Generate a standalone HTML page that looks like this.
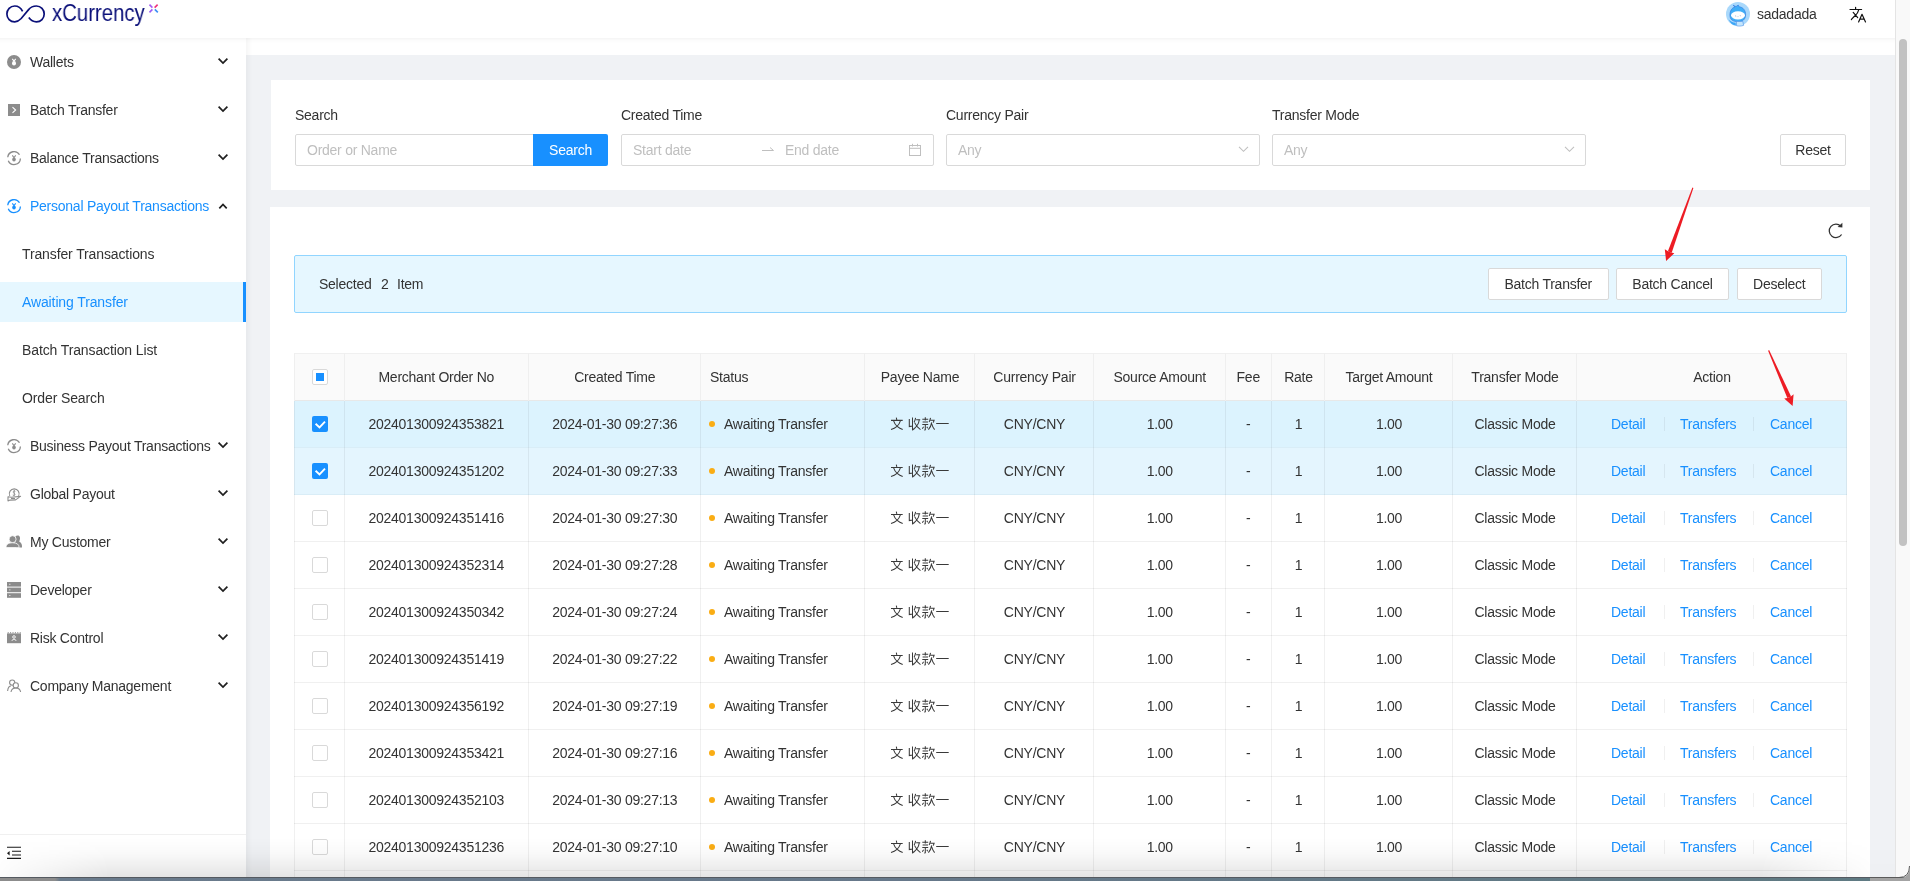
<!DOCTYPE html><html><head><meta charset="utf-8"><style>
*{box-sizing:border-box;margin:0;padding:0}
html,body{width:1910px;height:881px;overflow:hidden;background:#fff;font-family:"Liberation Sans",sans-serif;font-size:14px;color:#333;letter-spacing:-0.25px}
.btn,#content>div{will-change:transform}
.abs{position:absolute}
svg{position:absolute;overflow:visible}
#header{position:absolute;left:0;top:0;width:1895px;height:38px;background:#fff;z-index:5}
#hshadow{position:absolute;left:0;top:38px;width:1895px;height:5px;background:linear-gradient(rgba(0,0,0,0.045),rgba(0,0,0,0.01) 50%,rgba(0,0,0,0));z-index:5}
#sider{position:absolute;left:0;top:38px;width:246px;height:839px;background:#fff;z-index:3}
#content{position:absolute;left:246px;top:38px;width:1649px;height:839px;background:#f0f2f5;overflow:hidden}
#strip{position:absolute;left:0;top:0;width:1649px;height:17px;background:#fff}
#sshadow{position:absolute;left:0;top:0;width:6px;height:839px;background:linear-gradient(90deg,rgba(0,0,0,0.035),rgba(0,0,0,0));z-index:2}
#scroll{position:absolute;left:1895px;top:0;width:15px;height:877px;background:#f9f9f9;border-left:1px solid #e4e4e4;z-index:6}
#thumb{position:absolute;left:3px;top:39px;width:8px;height:507px;border-radius:4px;background:#c2c2c2}
.t{position:absolute;white-space:nowrap;line-height:20px;will-change:transform}
.card{position:absolute;background:#fff}
.inp{position:absolute;height:32px;border:1px solid #d9d9d9;border-radius:2px;background:#fff}
.ph{color:#bfbfbf}
.btn{position:absolute;height:32px;border:1px solid #d9d9d9;border-radius:2px;background:#fff;text-align:center;line-height:30px;white-space:nowrap;color:#333}
.cell{position:absolute;white-space:nowrap;line-height:20px;text-align:center;will-change:transform}
.link{color:#1890ff}
</style></head><body>
<div id="header">
<svg style="left:0;top:0" width="50" height="30"><path d="M22.6 11.3 C20.8 7.6 18 6 14.7 6 C10.2 6 6.9 9.6 6.9 14 C6.9 18.4 10.2 21.9 14.7 21.9 C17.4 21.9 19.2 20.6 21.2 18.5 L28.6 9.6 C30.6 7.2 33 6 36.4 6 C40.9 6 44.2 9.6 44.2 14 C44.2 18.4 40.9 21.9 36.4 21.9 C33.2 21.9 30.8 20.4 28.8 17.6" fill="none" stroke="#0b1079" stroke-width="1.7"/></svg>
<div class="t" style="left:52px;top:-1px;font-size:23px;line-height:28px;color:#0b1079;letter-spacing:0;transform:scaleX(0.885);transform-origin:0 0">xCurrency</div>
<svg style="left:0;top:0" width="1" height="1"><path d="M149.5 4.6 L152.4 7.6" stroke="#a25cf2" stroke-width="1.6"/><path d="M157.6 4.6 L154.6 7.6" stroke="#f0307a" stroke-width="1.6"/><path d="M149.5 12.4 L152.4 9.4" stroke="#9a5cf5" stroke-width="1.6"/><path d="M157.8 12.4 L154.8 9.4" stroke="#3b8ef5" stroke-width="1.6"/></svg>
<svg style="left:1726px;top:2px" width="24" height="24" viewBox="0 0 24 24"><circle cx="12" cy="12" r="12" fill="#a9d8fb"/><path d="M4 14 C3.6 9 6 5.6 9 5 L7 3.2 L10 4.6 L12.2 3 L13.2 4.8 C17 5.2 19.8 8.5 19.6 13 C19.4 17.6 16.6 19.6 12 19.6 C7 19.6 4.3 17.8 4 14Z" fill="#40aef7" stroke="#3a7fe2" stroke-width="0.7"/><ellipse cx="12" cy="13.3" rx="7" ry="4.1" fill="#fff"/><path d="M9 13.8 L10.2 14.2 M11.6 14.6 L12.4 14.6 M13.8 13.6 L14.8 13.8" stroke="#9ab0d0" stroke-width="0.8"/><path d="M2.6 17.5 C4.5 19.5 6.5 20.5 9.5 20.8 L10 23.5 C7 23.4 4.2 21.4 2.6 17.5Z" fill="#3ca6f6"/><path d="M10.4 19.4 L16.8 19.4 L17.6 23.4 C15 24.2 12.5 24.3 10.6 23.8Z" fill="#c5e6fd" stroke="#4a90e8" stroke-width="0.6"/></svg>
<div class="t" style="left:1757px;top:4px">sadadada</div>
<svg style="left:0;top:0" width="1" height="1"><path d="M1850 9.5 L1861.6 9.5 M1855.6 7.3 L1855.6 9.5 M1858.6 10.2 C1858 12.5 1857.2 14 1855.5 15.2 C1854 16.5 1852.8 18 1851.4 19.5 M1853.2 12.4 L1857.7 17.6" fill="none" stroke="#111" stroke-width="1.2" stroke-linecap="round"/><path d="M1858.6 22 L1862 14.3 L1865.5 22 M1860 19.2 L1864.3 19.2" fill="none" stroke="#111" stroke-width="1.2" stroke-linecap="round" stroke-linejoin="round"/></svg>
</div><div id="hshadow"></div>
<div id="sider">
<div class="t" style="left:30px;top:14px;color:#333;">Wallets</div>
<svg style="left:0;top:0" width="1" height="1"><circle cx="14" cy="24" r="7" fill="#8c8c8c"/><path d="M12.3 20.8 L14 23.1 L15.7 20.8" stroke="#fff" stroke-width="1.1" fill="none"/><ellipse cx="14" cy="25.3" rx="2" ry="2.3" fill="#fff"/></svg>
<svg style="left:0;top:0" width="1" height="1"><path d="M218.6 20.7 L223.0 25.1 L227.4 20.7" fill="none" stroke="#1f1f1f" stroke-width="1.7"/></svg>
<div class="t" style="left:30px;top:62px;color:#333;">Batch Transfer</div>
<svg style="left:0;top:0" width="1" height="1"><rect x="8" y="66" width="12" height="12" fill="#8c8c8c"/><path d="M12.5 69.2 L15.6 72 L12.5 74.8" stroke="#fff" stroke-width="1.1" fill="none"/></svg>
<svg style="left:0;top:0" width="1" height="1"><path d="M218.6 68.7 L223.0 73.10000000000001 L227.4 68.7" fill="none" stroke="#1f1f1f" stroke-width="1.7"/></svg>
<div class="t" style="left:30px;top:110px;color:#333;">Balance Transactions</div>
<svg style="left:0;top:0" width="1" height="1"><path d="M7.75 119.3 A6.3 6.3 0 0 1 19.5 116.8" stroke="#8c8c8c" stroke-width="1.3" fill="none"/><path d="M20.4 120.5 A6.3 6.3 0 0 1 8.3 122.7" stroke="#8c8c8c" stroke-width="1.3" fill="none"/><path d="M12.3 117.3 L14 119.5 L15.7 117.3" stroke="#8c8c8c" stroke-width="1.1" fill="none"/><ellipse cx="14" cy="121.5" rx="1.8" ry="2" fill="#8c8c8c"/></svg>
<svg style="left:0;top:0" width="1" height="1"><path d="M218.6 116.7 L223.0 121.10000000000001 L227.4 116.7" fill="none" stroke="#1f1f1f" stroke-width="1.7"/></svg>
<div class="t" style="left:30px;top:158px;color:#1890ff;">Personal Payout Transactions</div>
<svg style="left:0;top:0" width="1" height="1"><path d="M7.75 167.3 A6.3 6.3 0 0 1 19.5 164.8" stroke="#1890ff" stroke-width="1.3" fill="none"/><path d="M20.4 168.5 A6.3 6.3 0 0 1 8.3 170.7" stroke="#1890ff" stroke-width="1.3" fill="none"/><path d="M12.3 165.3 L14 167.5 L15.7 165.3" stroke="#1890ff" stroke-width="1.1" fill="none"/><ellipse cx="14" cy="169.5" rx="1.8" ry="2" fill="#1890ff"/></svg>
<svg style="left:0;top:0" width="1" height="1"><path d="M219.3 170.4 L223.0 166.4 L226.70000000000002 170.4" fill="none" stroke="#1f1f1f" stroke-width="1.7"/></svg>
<div class="t" style="left:22px;top:206px;color:#333;letter-spacing:-0.12px;">Transfer Transactions</div>
<div class="abs" style="left:0;top:244px;width:246px;height:40px;background:#e6f7ff"></div>
<div class="abs" style="left:243px;top:244px;width:3px;height:40px;background:#1890ff"></div>
<div class="t" style="left:22px;top:254px;color:#1890ff;letter-spacing:-0.12px;">Awaiting Transfer</div>
<div class="t" style="left:22px;top:302px;color:#333;letter-spacing:-0.12px;">Batch Transaction List</div>
<div class="t" style="left:22px;top:350px;color:#333;letter-spacing:-0.12px;">Order Search</div>
<div class="t" style="left:30px;top:398px;color:#333;">Business Payout Transactions</div>
<svg style="left:0;top:0" width="1" height="1"><path d="M7.75 407.3 A6.3 6.3 0 0 1 19.5 404.8" stroke="#8c8c8c" stroke-width="1.3" fill="none"/><path d="M20.4 408.5 A6.3 6.3 0 0 1 8.3 410.7" stroke="#8c8c8c" stroke-width="1.3" fill="none"/><path d="M12.3 405.3 L14 407.5 L15.7 405.3" stroke="#8c8c8c" stroke-width="1.1" fill="none"/><ellipse cx="14" cy="409.5" rx="1.8" ry="2" fill="#8c8c8c"/></svg>
<svg style="left:0;top:0" width="1" height="1"><path d="M218.6 404.7 L223.0 409.09999999999997 L227.4 404.7" fill="none" stroke="#1f1f1f" stroke-width="1.7"/></svg>
<div class="t" style="left:30px;top:446px;color:#333;">Global Payout</div>
<svg style="left:0;top:0" width="1" height="1"><path d="M9.8 457.9 A4.9 4.9 0 1 1 18.6 457.9" stroke="#8c8c8c" stroke-width="1.1" fill="none"/><path d="M15.3 453.3 C14.2 452.5 12.8 453.3 13.4 454.5 C14.2 455.5 15.6 456.1 14.6 457.1 C13.8 457.7 12.8 457.3 12.6 456.9 M14.2 451.9 L14.2 457.9" stroke="#8c8c8c" stroke-width="0.9" fill="none"/><path d="M8 462.9 L8 458.7 L11.2 459.3 L20.6 458.4 L15.6 461.9 L10 462.1 Z M11 460.5 L15 460.5" stroke="#8c8c8c" stroke-width="1.1" fill="none" stroke-linejoin="round"/></svg>
<svg style="left:0;top:0" width="1" height="1"><path d="M218.6 452.7 L223.0 457.09999999999997 L227.4 452.7" fill="none" stroke="#1f1f1f" stroke-width="1.7"/></svg>
<div class="t" style="left:30px;top:494px;color:#333;">My Customer</div>
<svg style="left:0;top:0" width="1" height="1"><path d="M17.8 497.6 C20 497.6 20.6 500.4 19.6 502.4 C19.2 503.2 19.2 503.6 19.8 504 C21.4 505 22.2 506.6 22 509.4 L16 509.4 C16 506.4 15 505 14.6 504 C16.2 502.5 16.2 500 15.2 498.4 C15.8 497.8 16.8 497.6 17.8 497.6Z" fill="#8c8c8c"/><circle cx="12.6" cy="501.2" r="3.5" fill="#8c8c8c" stroke="#fff" stroke-width="0.8"/><path d="M6 509.6 C6.2 506.2 8.4 504.8 12.6 504.8 C16.8 504.8 19 506.2 19.2 509.6Z" fill="#8c8c8c" stroke="#fff" stroke-width="0.8"/></svg>
<svg style="left:0;top:0" width="1" height="1"><path d="M218.6 500.7 L223.0 505.09999999999997 L227.4 500.7" fill="none" stroke="#1f1f1f" stroke-width="1.7"/></svg>
<div class="t" style="left:30px;top:542px;color:#333;">Developer</div>
<svg style="left:0;top:0" width="1" height="1"><rect x="7" y="544" width="14" height="4.6" fill="#8c8c8c"/><rect x="7" y="549.6" width="14" height="4.6" fill="#8c8c8c"/><rect x="7" y="555.2" width="14" height="4.6" fill="#8c8c8c"/><path d="M9 546.3 L10.5 546.3 M9 551.9 L10.5 551.9 M9 557.5 L10.5 557.5" stroke="#ddd" stroke-width="0.9"/></svg>
<svg style="left:0;top:0" width="1" height="1"><path d="M218.6 548.7 L223.0 553.1 L227.4 548.7" fill="none" stroke="#1f1f1f" stroke-width="1.7"/></svg>
<div class="t" style="left:30px;top:590px;color:#333;">Risk Control</div>
<svg style="left:0;top:0" width="1" height="1"><rect x="7" y="595.4" width="14" height="9.8" fill="#8c8c8c"/><path d="M8.2 595.4 L8.2 594 M10.6 595.4 L10.6 594 M13 595.4 L13 594 M15.4 595.4 L15.4 594 M17.8 595.4 L17.8 594 M20.2 595.4 L20.2 594" stroke="#8c8c8c" stroke-width="0.9"/><circle cx="14" cy="599" r="1.3" stroke="#fff" stroke-width="0.9" fill="none"/><path d="M11.8 603 C12 601 16 601 16.2 603" stroke="#fff" stroke-width="0.9" fill="none"/></svg>
<svg style="left:0;top:0" width="1" height="1"><path d="M218.6 596.7 L223.0 601.1 L227.4 596.7" fill="none" stroke="#1f1f1f" stroke-width="1.7"/></svg>
<div class="t" style="left:30px;top:638px;color:#333;">Company Management</div>
<svg style="left:0;top:0" width="1" height="1"><circle cx="12.2" cy="644.6" r="2.6" stroke="#8c8c8c" stroke-width="1.1" fill="none"/><circle cx="15.8" cy="647.4" r="2.6" stroke="#8c8c8c" stroke-width="1.1" fill="#fff"/><path d="M7.6 653 C8 649.5 9.5 648 11 648" stroke="#8c8c8c" stroke-width="1.1" fill="none"/><path d="M11 654 C11.4 651.4 13.2 650 15.8 650 C18.4 650 20.2 651.4 20.6 654" stroke="#8c8c8c" stroke-width="1.1" fill="none"/></svg>
<svg style="left:0;top:0" width="1" height="1"><path d="M218.6 644.7 L223.0 649.1 L227.4 644.7" fill="none" stroke="#1f1f1f" stroke-width="1.7"/></svg>
<div class="abs" style="left:0;top:796px;width:246px;height:1px;background:#f0f0f0"></div>
<svg style="left:0;top:0" width="1" height="1"><path d="M7 809.3 L21 809.3 M7 820.4 L21 820.4 M12 813.2 L21 813.2 M12 817 L21 817" stroke="#1a1a1a" stroke-width="1.1"/><path d="M7 815.2 L9.6 813 L9.6 817.4 Z" fill="#1a1a1a"/></svg>
</div>
<div id="content"><div id="strip"></div><div id="sshadow"></div>
<div class="card" style="left:25px;top:42px;width:1599px;height:110px"></div>
<div class="t" style="left:49px;top:67px">Search</div>
<div class="t" style="left:375px;top:67px">Created Time</div>
<div class="t" style="left:700px;top:67px">Currency Pair</div>
<div class="t" style="left:1026px;top:67px">Transfer Mode</div>
<div class="inp" style="left:49px;top:96px;width:239px;border-radius:2px 0 0 2px"></div>
<div class="t ph" style="left:61px;top:102px">Order or Name</div>
<div class="abs" style="left:287px;top:96px;width:75px;height:32px;background:#1890ff;border-radius:0 2px 2px 0;color:#fff;text-align:center;line-height:32px">Search</div>
<div class="inp" style="left:375px;top:96px;width:313px"></div>
<div class="t ph" style="left:387px;top:102px">Start date</div>
<div class="t ph" style="left:539px;top:102px">End date</div>
<svg style="left:0;top:0" width="1" height="1"><path d="M516 112.5 L527.5 112.5 L524 109.5" stroke="#bfbfbf" stroke-width="1" fill="none"/><rect x="663.5" y="107.5" width="11" height="10" stroke="#bfbfbf" stroke-width="1" fill="none"/><path d="M663.5 110.30000000000001 L674.5 110.30000000000001 M666.5 105.80000000000001 L666.5 108.5 M671.5 105.80000000000001 L671.5 108.5" stroke="#bfbfbf" stroke-width="1"/></svg>
<div class="inp" style="left:700px;top:96px;width:314px"></div>
<div class="t ph" style="left:712px;top:102px">Any</div>
<svg style="left:0;top:0" width="1" height="1"><path d="M993 108.80000000000001 L997.5 113.30000000000001 L1002 108.80000000000001" stroke="#bfbfbf" stroke-width="1.1" fill="none"/></svg>
<div class="inp" style="left:1026px;top:96px;width:314px"></div>
<div class="t ph" style="left:1038px;top:102px">Any</div>
<svg style="left:0;top:0" width="1" height="1"><path d="M1319 108.80000000000001 L1323.5 113.30000000000001 L1328 108.80000000000001" stroke="#bfbfbf" stroke-width="1.1" fill="none"/></svg>
<div class="btn" style="left:1534px;top:96px;width:66px">Reset</div>
<div class="card" style="left:24px;top:169px;width:1600px;height:700px"></div>
<svg style="left:0;top:0" width="1" height="1"><path d="M1594.8 188.2 A6.7 6.7 0 1 0 1595.6 196.5" stroke="#333" stroke-width="1.3" fill="none"/><path d="M1591.6 188.9 L1596.4 189.6 L1596.4 184.8Z" fill="#333"/></svg>
<div class="abs" style="left:48px;top:217px;width:1553px;height:58px;background:#e6f7ff;border:1px solid #91d5ff;border-radius:2px"></div>
<div class="t" style="left:73px;top:236px">Selected</div><div class="t" style="left:134.5px;top:236px">2</div><div class="t" style="left:150.5px;top:236px">Item</div>
<div class="btn" style="left:1241.5px;top:230px;width:120.5px">Batch Transfer</div>
<div class="btn" style="left:1370px;top:230px;width:113px">Batch Cancel</div>
<div class="btn" style="left:1491px;top:230px;width:84.5px">Deselect</div>
<div class="abs" style="left:48px;top:315px;width:1553px;height:48px;background:#fafafa;border:1px solid #f0f0f0;border-bottom:1px solid #e8e8e8"></div>
<div class="abs" style="left:48px;top:363px;width:1553px;height:47px;background:#dcf3fe;border-bottom:1px solid #d9edf7"></div>
<div class="abs" style="left:48px;top:410px;width:1553px;height:47px;background:#e4f5fe;border-bottom:1px solid #d9edf7"></div>
<div class="abs" style="left:48px;top:457px;width:1553px;height:47px;background:#fff;border-bottom:1px solid #f0f0f0"></div>
<div class="abs" style="left:48px;top:504px;width:1553px;height:47px;background:#fff;border-bottom:1px solid #f0f0f0"></div>
<div class="abs" style="left:48px;top:551px;width:1553px;height:47px;background:#fff;border-bottom:1px solid #f0f0f0"></div>
<div class="abs" style="left:48px;top:598px;width:1553px;height:47px;background:#fff;border-bottom:1px solid #f0f0f0"></div>
<div class="abs" style="left:48px;top:645px;width:1553px;height:47px;background:#fff;border-bottom:1px solid #f0f0f0"></div>
<div class="abs" style="left:48px;top:692px;width:1553px;height:47px;background:#fff;border-bottom:1px solid #f0f0f0"></div>
<div class="abs" style="left:48px;top:739px;width:1553px;height:47px;background:#fff;border-bottom:1px solid #f0f0f0"></div>
<div class="abs" style="left:48px;top:786px;width:1553px;height:47px;background:#fff;border-bottom:1px solid #f0f0f0"></div>
<div class="abs" style="left:48px;top:833px;width:1553px;height:47px;background:#fff;border-bottom:1px solid #f0f0f0"></div>
<div class="abs" style="left:48.0px;top:315px;width:1px;height:48px;background:#efefef"></div>
<div class="abs" style="left:48.0px;top:363px;width:1px;height:600px;background:rgba(0,0,0,0.058)"></div>
<div class="abs" style="left:97.5px;top:315px;width:1px;height:48px;background:#efefef"></div>
<div class="abs" style="left:97.5px;top:363px;width:1px;height:600px;background:rgba(0,0,0,0.058)"></div>
<div class="abs" style="left:282.0px;top:315px;width:1px;height:48px;background:#efefef"></div>
<div class="abs" style="left:282.0px;top:363px;width:1px;height:600px;background:rgba(0,0,0,0.058)"></div>
<div class="abs" style="left:453.5px;top:315px;width:1px;height:48px;background:#efefef"></div>
<div class="abs" style="left:453.5px;top:363px;width:1px;height:600px;background:rgba(0,0,0,0.058)"></div>
<div class="abs" style="left:618.0px;top:315px;width:1px;height:48px;background:#efefef"></div>
<div class="abs" style="left:618.0px;top:363px;width:1px;height:600px;background:rgba(0,0,0,0.058)"></div>
<div class="abs" style="left:728.0px;top:315px;width:1px;height:48px;background:#efefef"></div>
<div class="abs" style="left:728.0px;top:363px;width:1px;height:600px;background:rgba(0,0,0,0.058)"></div>
<div class="abs" style="left:847.0px;top:315px;width:1px;height:48px;background:#efefef"></div>
<div class="abs" style="left:847.0px;top:363px;width:1px;height:600px;background:rgba(0,0,0,0.058)"></div>
<div class="abs" style="left:978.5px;top:315px;width:1px;height:48px;background:#efefef"></div>
<div class="abs" style="left:978.5px;top:363px;width:1px;height:600px;background:rgba(0,0,0,0.058)"></div>
<div class="abs" style="left:1025.0px;top:315px;width:1px;height:48px;background:#efefef"></div>
<div class="abs" style="left:1025.0px;top:363px;width:1px;height:600px;background:rgba(0,0,0,0.058)"></div>
<div class="abs" style="left:1078.0px;top:315px;width:1px;height:48px;background:#efefef"></div>
<div class="abs" style="left:1078.0px;top:363px;width:1px;height:600px;background:rgba(0,0,0,0.058)"></div>
<div class="abs" style="left:1206.0px;top:315px;width:1px;height:48px;background:#efefef"></div>
<div class="abs" style="left:1206.0px;top:363px;width:1px;height:600px;background:rgba(0,0,0,0.058)"></div>
<div class="abs" style="left:1330.0px;top:315px;width:1px;height:48px;background:#efefef"></div>
<div class="abs" style="left:1330.0px;top:363px;width:1px;height:600px;background:rgba(0,0,0,0.058)"></div>
<div class="abs" style="left:1600.0px;top:315px;width:1px;height:48px;background:#efefef"></div>
<div class="abs" style="left:1600.0px;top:363px;width:1px;height:600px;background:rgba(0,0,0,0.058)"></div>
<div class="cell" style="left:98px;top:328.5px;width:184.5px">Merchant Order No</div>
<div class="cell" style="left:282.5px;top:328.5px;width:171.5px">Created Time</div>
<div class="t" style="left:463.5px;top:328.5px">Status</div>
<div class="cell" style="left:618.5px;top:328.5px;width:110.0px">Payee Name</div>
<div class="cell" style="left:728.5px;top:328.5px;width:119.0px">Currency Pair</div>
<div class="cell" style="left:847.5px;top:328.5px;width:131.5px">Source Amount</div>
<div class="cell" style="left:979px;top:328.5px;width:46.5px">Fee</div>
<div class="cell" style="left:1025.5px;top:328.5px;width:53.0px">Rate</div>
<div class="cell" style="left:1078.5px;top:328.5px;width:128.0px">Target Amount</div>
<div class="cell" style="left:1206.5px;top:328.5px;width:124.0px">Transfer Mode</div>
<div class="cell" style="left:1330.5px;top:328.5px;width:270.0px">Action</div>
<div class="abs" style="left:66px;top:331px;width:16px;height:16px;border:1px solid #d9d9d9;border-radius:2px;background:#fff"></div>
<div class="abs" style="left:70px;top:335px;width:8px;height:8px;background:#1890ff"></div>
<div class="abs" style="left:66px;top:377.5px;width:16px;height:16px;border-radius:2px;background:#1890ff"></div>
<svg style="left:0;top:0" width="1" height="1"><path d="M69.60000000000002 385.8 L73.5 389.4 L79 383.7" stroke="#fff" stroke-width="1.9" fill="none"/></svg>
<svg style="left:640px;top:374.0px" width="68" height="24"><path d="M10.3 5.6 L10.8 7.8 M5 8.4 L16.7 8.4 M7.4 8.4 C8.4 11.4 9.6 13.2 11.2 14.4 C12.8 15.8 14.6 16.9 16.7 17.6 M14.6 8.4 C13.6 11.4 12.6 13.2 11 14.4 C9.4 15.8 7.4 16.9 5 17.6 M23.3 7.1 L23.3 14.6 L26.5 14 M26.5 5.6 L26.5 17.8 L28.6 16.6 M29.6 5.9 C29.3 7.6 28.8 9 28.1 10.3 M30.2 7.8 L34.2 7.8 M33.3 7.8 C32.8 11.6 31.4 14.6 26.8 17.8 M28.6 10.6 C30 13.6 32 16 34.5 17.6 M36.3 7.3 L42.2 7.3 M39.3 5.3 L39.3 8.5 M36.6 10 L42 10 M36.3 12.5 L42.2 12.5 M39.3 12.5 L39.3 17.6 L38.4 18.2 M37.6 14.8 L36.3 16.7 M40.9 14.8 L41.6 16.2 M44.5 5.9 C44.2 7.6 43.8 8.9 43.1 10 M44.4 8.2 L48.1 8.2 L47.3 10.7 M45.7 10.4 C45.2 13.6 44 15.8 42.4 17.6 M45.7 11.8 C46.4 14.2 47.4 16.2 48.6 17.6 M50.2 11.5 L62.7 11.5" fill="none" stroke="#3a3a3a" stroke-width="1.05"/></svg>
<div class="cell" style="left:98px;top:375.5px;width:184.5px">202401300924353821</div>
<div class="cell" style="left:282.5px;top:375.5px;width:171.5px">2024-01-30 09:27:36</div>
<div class="cell" style="left:728.5px;top:375.5px;width:119.0px">CNY/CNY</div>
<div class="cell" style="left:847.5px;top:375.5px;width:131.5px">1.00</div>
<div class="cell" style="left:979px;top:375.5px;width:46.5px">-</div>
<div class="cell" style="left:1025.5px;top:375.5px;width:53.0px">1</div>
<div class="cell" style="left:1078.5px;top:375.5px;width:128.0px">1.00</div>
<div class="cell" style="left:1206.5px;top:375.5px;width:124.0px">Classic Mode</div>
<div class="abs" style="left:463px;top:382.5px;width:6px;height:6px;border-radius:3px;background:#faad14"></div>
<div class="t" style="left:477.5px;top:375.5px">Awaiting Transfer</div>
<div class="t link" style="left:1365px;top:375.5px">Detail</div>
<div class="t link" style="left:1434px;top:375.5px">Transfers</div>
<div class="t link" style="left:1523.5px;top:375.5px">Cancel</div>
<div class="abs" style="left:1417.5px;top:378.5px;width:1px;height:14px;background:rgba(0,0,0,0.06)"></div>
<div class="abs" style="left:1507px;top:378.5px;width:1px;height:14px;background:rgba(0,0,0,0.06)"></div>
<div class="abs" style="left:66px;top:424.5px;width:16px;height:16px;border-radius:2px;background:#1890ff"></div>
<svg style="left:0;top:0" width="1" height="1"><path d="M69.60000000000002 432.8 L73.5 436.4 L79 430.7" stroke="#fff" stroke-width="1.9" fill="none"/></svg>
<svg style="left:640px;top:421.0px" width="68" height="24"><path d="M10.3 5.6 L10.8 7.8 M5 8.4 L16.7 8.4 M7.4 8.4 C8.4 11.4 9.6 13.2 11.2 14.4 C12.8 15.8 14.6 16.9 16.7 17.6 M14.6 8.4 C13.6 11.4 12.6 13.2 11 14.4 C9.4 15.8 7.4 16.9 5 17.6 M23.3 7.1 L23.3 14.6 L26.5 14 M26.5 5.6 L26.5 17.8 L28.6 16.6 M29.6 5.9 C29.3 7.6 28.8 9 28.1 10.3 M30.2 7.8 L34.2 7.8 M33.3 7.8 C32.8 11.6 31.4 14.6 26.8 17.8 M28.6 10.6 C30 13.6 32 16 34.5 17.6 M36.3 7.3 L42.2 7.3 M39.3 5.3 L39.3 8.5 M36.6 10 L42 10 M36.3 12.5 L42.2 12.5 M39.3 12.5 L39.3 17.6 L38.4 18.2 M37.6 14.8 L36.3 16.7 M40.9 14.8 L41.6 16.2 M44.5 5.9 C44.2 7.6 43.8 8.9 43.1 10 M44.4 8.2 L48.1 8.2 L47.3 10.7 M45.7 10.4 C45.2 13.6 44 15.8 42.4 17.6 M45.7 11.8 C46.4 14.2 47.4 16.2 48.6 17.6 M50.2 11.5 L62.7 11.5" fill="none" stroke="#3a3a3a" stroke-width="1.05"/></svg>
<div class="cell" style="left:98px;top:422.5px;width:184.5px">202401300924351202</div>
<div class="cell" style="left:282.5px;top:422.5px;width:171.5px">2024-01-30 09:27:33</div>
<div class="cell" style="left:728.5px;top:422.5px;width:119.0px">CNY/CNY</div>
<div class="cell" style="left:847.5px;top:422.5px;width:131.5px">1.00</div>
<div class="cell" style="left:979px;top:422.5px;width:46.5px">-</div>
<div class="cell" style="left:1025.5px;top:422.5px;width:53.0px">1</div>
<div class="cell" style="left:1078.5px;top:422.5px;width:128.0px">1.00</div>
<div class="cell" style="left:1206.5px;top:422.5px;width:124.0px">Classic Mode</div>
<div class="abs" style="left:463px;top:429.5px;width:6px;height:6px;border-radius:3px;background:#faad14"></div>
<div class="t" style="left:477.5px;top:422.5px">Awaiting Transfer</div>
<div class="t link" style="left:1365px;top:422.5px">Detail</div>
<div class="t link" style="left:1434px;top:422.5px">Transfers</div>
<div class="t link" style="left:1523.5px;top:422.5px">Cancel</div>
<div class="abs" style="left:1417.5px;top:425.5px;width:1px;height:14px;background:rgba(0,0,0,0.06)"></div>
<div class="abs" style="left:1507px;top:425.5px;width:1px;height:14px;background:rgba(0,0,0,0.06)"></div>
<div class="abs" style="left:66px;top:471.5px;width:16px;height:16px;border:1px solid #d9d9d9;border-radius:2px;background:#fff"></div>
<svg style="left:640px;top:468.0px" width="68" height="24"><path d="M10.3 5.6 L10.8 7.8 M5 8.4 L16.7 8.4 M7.4 8.4 C8.4 11.4 9.6 13.2 11.2 14.4 C12.8 15.8 14.6 16.9 16.7 17.6 M14.6 8.4 C13.6 11.4 12.6 13.2 11 14.4 C9.4 15.8 7.4 16.9 5 17.6 M23.3 7.1 L23.3 14.6 L26.5 14 M26.5 5.6 L26.5 17.8 L28.6 16.6 M29.6 5.9 C29.3 7.6 28.8 9 28.1 10.3 M30.2 7.8 L34.2 7.8 M33.3 7.8 C32.8 11.6 31.4 14.6 26.8 17.8 M28.6 10.6 C30 13.6 32 16 34.5 17.6 M36.3 7.3 L42.2 7.3 M39.3 5.3 L39.3 8.5 M36.6 10 L42 10 M36.3 12.5 L42.2 12.5 M39.3 12.5 L39.3 17.6 L38.4 18.2 M37.6 14.8 L36.3 16.7 M40.9 14.8 L41.6 16.2 M44.5 5.9 C44.2 7.6 43.8 8.9 43.1 10 M44.4 8.2 L48.1 8.2 L47.3 10.7 M45.7 10.4 C45.2 13.6 44 15.8 42.4 17.6 M45.7 11.8 C46.4 14.2 47.4 16.2 48.6 17.6 M50.2 11.5 L62.7 11.5" fill="none" stroke="#3a3a3a" stroke-width="1.05"/></svg>
<div class="cell" style="left:98px;top:469.5px;width:184.5px">202401300924351416</div>
<div class="cell" style="left:282.5px;top:469.5px;width:171.5px">2024-01-30 09:27:30</div>
<div class="cell" style="left:728.5px;top:469.5px;width:119.0px">CNY/CNY</div>
<div class="cell" style="left:847.5px;top:469.5px;width:131.5px">1.00</div>
<div class="cell" style="left:979px;top:469.5px;width:46.5px">-</div>
<div class="cell" style="left:1025.5px;top:469.5px;width:53.0px">1</div>
<div class="cell" style="left:1078.5px;top:469.5px;width:128.0px">1.00</div>
<div class="cell" style="left:1206.5px;top:469.5px;width:124.0px">Classic Mode</div>
<div class="abs" style="left:463px;top:476.5px;width:6px;height:6px;border-radius:3px;background:#faad14"></div>
<div class="t" style="left:477.5px;top:469.5px">Awaiting Transfer</div>
<div class="t link" style="left:1365px;top:469.5px">Detail</div>
<div class="t link" style="left:1434px;top:469.5px">Transfers</div>
<div class="t link" style="left:1523.5px;top:469.5px">Cancel</div>
<div class="abs" style="left:1417.5px;top:472.5px;width:1px;height:14px;background:rgba(0,0,0,0.06)"></div>
<div class="abs" style="left:1507px;top:472.5px;width:1px;height:14px;background:rgba(0,0,0,0.06)"></div>
<div class="abs" style="left:66px;top:518.5px;width:16px;height:16px;border:1px solid #d9d9d9;border-radius:2px;background:#fff"></div>
<svg style="left:640px;top:515.0px" width="68" height="24"><path d="M10.3 5.6 L10.8 7.8 M5 8.4 L16.7 8.4 M7.4 8.4 C8.4 11.4 9.6 13.2 11.2 14.4 C12.8 15.8 14.6 16.9 16.7 17.6 M14.6 8.4 C13.6 11.4 12.6 13.2 11 14.4 C9.4 15.8 7.4 16.9 5 17.6 M23.3 7.1 L23.3 14.6 L26.5 14 M26.5 5.6 L26.5 17.8 L28.6 16.6 M29.6 5.9 C29.3 7.6 28.8 9 28.1 10.3 M30.2 7.8 L34.2 7.8 M33.3 7.8 C32.8 11.6 31.4 14.6 26.8 17.8 M28.6 10.6 C30 13.6 32 16 34.5 17.6 M36.3 7.3 L42.2 7.3 M39.3 5.3 L39.3 8.5 M36.6 10 L42 10 M36.3 12.5 L42.2 12.5 M39.3 12.5 L39.3 17.6 L38.4 18.2 M37.6 14.8 L36.3 16.7 M40.9 14.8 L41.6 16.2 M44.5 5.9 C44.2 7.6 43.8 8.9 43.1 10 M44.4 8.2 L48.1 8.2 L47.3 10.7 M45.7 10.4 C45.2 13.6 44 15.8 42.4 17.6 M45.7 11.8 C46.4 14.2 47.4 16.2 48.6 17.6 M50.2 11.5 L62.7 11.5" fill="none" stroke="#3a3a3a" stroke-width="1.05"/></svg>
<div class="cell" style="left:98px;top:516.5px;width:184.5px">202401300924352314</div>
<div class="cell" style="left:282.5px;top:516.5px;width:171.5px">2024-01-30 09:27:28</div>
<div class="cell" style="left:728.5px;top:516.5px;width:119.0px">CNY/CNY</div>
<div class="cell" style="left:847.5px;top:516.5px;width:131.5px">1.00</div>
<div class="cell" style="left:979px;top:516.5px;width:46.5px">-</div>
<div class="cell" style="left:1025.5px;top:516.5px;width:53.0px">1</div>
<div class="cell" style="left:1078.5px;top:516.5px;width:128.0px">1.00</div>
<div class="cell" style="left:1206.5px;top:516.5px;width:124.0px">Classic Mode</div>
<div class="abs" style="left:463px;top:523.5px;width:6px;height:6px;border-radius:3px;background:#faad14"></div>
<div class="t" style="left:477.5px;top:516.5px">Awaiting Transfer</div>
<div class="t link" style="left:1365px;top:516.5px">Detail</div>
<div class="t link" style="left:1434px;top:516.5px">Transfers</div>
<div class="t link" style="left:1523.5px;top:516.5px">Cancel</div>
<div class="abs" style="left:1417.5px;top:519.5px;width:1px;height:14px;background:rgba(0,0,0,0.06)"></div>
<div class="abs" style="left:1507px;top:519.5px;width:1px;height:14px;background:rgba(0,0,0,0.06)"></div>
<div class="abs" style="left:66px;top:565.5px;width:16px;height:16px;border:1px solid #d9d9d9;border-radius:2px;background:#fff"></div>
<svg style="left:640px;top:562.0px" width="68" height="24"><path d="M10.3 5.6 L10.8 7.8 M5 8.4 L16.7 8.4 M7.4 8.4 C8.4 11.4 9.6 13.2 11.2 14.4 C12.8 15.8 14.6 16.9 16.7 17.6 M14.6 8.4 C13.6 11.4 12.6 13.2 11 14.4 C9.4 15.8 7.4 16.9 5 17.6 M23.3 7.1 L23.3 14.6 L26.5 14 M26.5 5.6 L26.5 17.8 L28.6 16.6 M29.6 5.9 C29.3 7.6 28.8 9 28.1 10.3 M30.2 7.8 L34.2 7.8 M33.3 7.8 C32.8 11.6 31.4 14.6 26.8 17.8 M28.6 10.6 C30 13.6 32 16 34.5 17.6 M36.3 7.3 L42.2 7.3 M39.3 5.3 L39.3 8.5 M36.6 10 L42 10 M36.3 12.5 L42.2 12.5 M39.3 12.5 L39.3 17.6 L38.4 18.2 M37.6 14.8 L36.3 16.7 M40.9 14.8 L41.6 16.2 M44.5 5.9 C44.2 7.6 43.8 8.9 43.1 10 M44.4 8.2 L48.1 8.2 L47.3 10.7 M45.7 10.4 C45.2 13.6 44 15.8 42.4 17.6 M45.7 11.8 C46.4 14.2 47.4 16.2 48.6 17.6 M50.2 11.5 L62.7 11.5" fill="none" stroke="#3a3a3a" stroke-width="1.05"/></svg>
<div class="cell" style="left:98px;top:563.5px;width:184.5px">202401300924350342</div>
<div class="cell" style="left:282.5px;top:563.5px;width:171.5px">2024-01-30 09:27:24</div>
<div class="cell" style="left:728.5px;top:563.5px;width:119.0px">CNY/CNY</div>
<div class="cell" style="left:847.5px;top:563.5px;width:131.5px">1.00</div>
<div class="cell" style="left:979px;top:563.5px;width:46.5px">-</div>
<div class="cell" style="left:1025.5px;top:563.5px;width:53.0px">1</div>
<div class="cell" style="left:1078.5px;top:563.5px;width:128.0px">1.00</div>
<div class="cell" style="left:1206.5px;top:563.5px;width:124.0px">Classic Mode</div>
<div class="abs" style="left:463px;top:570.5px;width:6px;height:6px;border-radius:3px;background:#faad14"></div>
<div class="t" style="left:477.5px;top:563.5px">Awaiting Transfer</div>
<div class="t link" style="left:1365px;top:563.5px">Detail</div>
<div class="t link" style="left:1434px;top:563.5px">Transfers</div>
<div class="t link" style="left:1523.5px;top:563.5px">Cancel</div>
<div class="abs" style="left:1417.5px;top:566.5px;width:1px;height:14px;background:rgba(0,0,0,0.06)"></div>
<div class="abs" style="left:1507px;top:566.5px;width:1px;height:14px;background:rgba(0,0,0,0.06)"></div>
<div class="abs" style="left:66px;top:612.5px;width:16px;height:16px;border:1px solid #d9d9d9;border-radius:2px;background:#fff"></div>
<svg style="left:640px;top:609.0px" width="68" height="24"><path d="M10.3 5.6 L10.8 7.8 M5 8.4 L16.7 8.4 M7.4 8.4 C8.4 11.4 9.6 13.2 11.2 14.4 C12.8 15.8 14.6 16.9 16.7 17.6 M14.6 8.4 C13.6 11.4 12.6 13.2 11 14.4 C9.4 15.8 7.4 16.9 5 17.6 M23.3 7.1 L23.3 14.6 L26.5 14 M26.5 5.6 L26.5 17.8 L28.6 16.6 M29.6 5.9 C29.3 7.6 28.8 9 28.1 10.3 M30.2 7.8 L34.2 7.8 M33.3 7.8 C32.8 11.6 31.4 14.6 26.8 17.8 M28.6 10.6 C30 13.6 32 16 34.5 17.6 M36.3 7.3 L42.2 7.3 M39.3 5.3 L39.3 8.5 M36.6 10 L42 10 M36.3 12.5 L42.2 12.5 M39.3 12.5 L39.3 17.6 L38.4 18.2 M37.6 14.8 L36.3 16.7 M40.9 14.8 L41.6 16.2 M44.5 5.9 C44.2 7.6 43.8 8.9 43.1 10 M44.4 8.2 L48.1 8.2 L47.3 10.7 M45.7 10.4 C45.2 13.6 44 15.8 42.4 17.6 M45.7 11.8 C46.4 14.2 47.4 16.2 48.6 17.6 M50.2 11.5 L62.7 11.5" fill="none" stroke="#3a3a3a" stroke-width="1.05"/></svg>
<div class="cell" style="left:98px;top:610.5px;width:184.5px">202401300924351419</div>
<div class="cell" style="left:282.5px;top:610.5px;width:171.5px">2024-01-30 09:27:22</div>
<div class="cell" style="left:728.5px;top:610.5px;width:119.0px">CNY/CNY</div>
<div class="cell" style="left:847.5px;top:610.5px;width:131.5px">1.00</div>
<div class="cell" style="left:979px;top:610.5px;width:46.5px">-</div>
<div class="cell" style="left:1025.5px;top:610.5px;width:53.0px">1</div>
<div class="cell" style="left:1078.5px;top:610.5px;width:128.0px">1.00</div>
<div class="cell" style="left:1206.5px;top:610.5px;width:124.0px">Classic Mode</div>
<div class="abs" style="left:463px;top:617.5px;width:6px;height:6px;border-radius:3px;background:#faad14"></div>
<div class="t" style="left:477.5px;top:610.5px">Awaiting Transfer</div>
<div class="t link" style="left:1365px;top:610.5px">Detail</div>
<div class="t link" style="left:1434px;top:610.5px">Transfers</div>
<div class="t link" style="left:1523.5px;top:610.5px">Cancel</div>
<div class="abs" style="left:1417.5px;top:613.5px;width:1px;height:14px;background:rgba(0,0,0,0.06)"></div>
<div class="abs" style="left:1507px;top:613.5px;width:1px;height:14px;background:rgba(0,0,0,0.06)"></div>
<div class="abs" style="left:66px;top:659.5px;width:16px;height:16px;border:1px solid #d9d9d9;border-radius:2px;background:#fff"></div>
<svg style="left:640px;top:656.0px" width="68" height="24"><path d="M10.3 5.6 L10.8 7.8 M5 8.4 L16.7 8.4 M7.4 8.4 C8.4 11.4 9.6 13.2 11.2 14.4 C12.8 15.8 14.6 16.9 16.7 17.6 M14.6 8.4 C13.6 11.4 12.6 13.2 11 14.4 C9.4 15.8 7.4 16.9 5 17.6 M23.3 7.1 L23.3 14.6 L26.5 14 M26.5 5.6 L26.5 17.8 L28.6 16.6 M29.6 5.9 C29.3 7.6 28.8 9 28.1 10.3 M30.2 7.8 L34.2 7.8 M33.3 7.8 C32.8 11.6 31.4 14.6 26.8 17.8 M28.6 10.6 C30 13.6 32 16 34.5 17.6 M36.3 7.3 L42.2 7.3 M39.3 5.3 L39.3 8.5 M36.6 10 L42 10 M36.3 12.5 L42.2 12.5 M39.3 12.5 L39.3 17.6 L38.4 18.2 M37.6 14.8 L36.3 16.7 M40.9 14.8 L41.6 16.2 M44.5 5.9 C44.2 7.6 43.8 8.9 43.1 10 M44.4 8.2 L48.1 8.2 L47.3 10.7 M45.7 10.4 C45.2 13.6 44 15.8 42.4 17.6 M45.7 11.8 C46.4 14.2 47.4 16.2 48.6 17.6 M50.2 11.5 L62.7 11.5" fill="none" stroke="#3a3a3a" stroke-width="1.05"/></svg>
<div class="cell" style="left:98px;top:657.5px;width:184.5px">202401300924356192</div>
<div class="cell" style="left:282.5px;top:657.5px;width:171.5px">2024-01-30 09:27:19</div>
<div class="cell" style="left:728.5px;top:657.5px;width:119.0px">CNY/CNY</div>
<div class="cell" style="left:847.5px;top:657.5px;width:131.5px">1.00</div>
<div class="cell" style="left:979px;top:657.5px;width:46.5px">-</div>
<div class="cell" style="left:1025.5px;top:657.5px;width:53.0px">1</div>
<div class="cell" style="left:1078.5px;top:657.5px;width:128.0px">1.00</div>
<div class="cell" style="left:1206.5px;top:657.5px;width:124.0px">Classic Mode</div>
<div class="abs" style="left:463px;top:664.5px;width:6px;height:6px;border-radius:3px;background:#faad14"></div>
<div class="t" style="left:477.5px;top:657.5px">Awaiting Transfer</div>
<div class="t link" style="left:1365px;top:657.5px">Detail</div>
<div class="t link" style="left:1434px;top:657.5px">Transfers</div>
<div class="t link" style="left:1523.5px;top:657.5px">Cancel</div>
<div class="abs" style="left:1417.5px;top:660.5px;width:1px;height:14px;background:rgba(0,0,0,0.06)"></div>
<div class="abs" style="left:1507px;top:660.5px;width:1px;height:14px;background:rgba(0,0,0,0.06)"></div>
<div class="abs" style="left:66px;top:706.5px;width:16px;height:16px;border:1px solid #d9d9d9;border-radius:2px;background:#fff"></div>
<svg style="left:640px;top:703.0px" width="68" height="24"><path d="M10.3 5.6 L10.8 7.8 M5 8.4 L16.7 8.4 M7.4 8.4 C8.4 11.4 9.6 13.2 11.2 14.4 C12.8 15.8 14.6 16.9 16.7 17.6 M14.6 8.4 C13.6 11.4 12.6 13.2 11 14.4 C9.4 15.8 7.4 16.9 5 17.6 M23.3 7.1 L23.3 14.6 L26.5 14 M26.5 5.6 L26.5 17.8 L28.6 16.6 M29.6 5.9 C29.3 7.6 28.8 9 28.1 10.3 M30.2 7.8 L34.2 7.8 M33.3 7.8 C32.8 11.6 31.4 14.6 26.8 17.8 M28.6 10.6 C30 13.6 32 16 34.5 17.6 M36.3 7.3 L42.2 7.3 M39.3 5.3 L39.3 8.5 M36.6 10 L42 10 M36.3 12.5 L42.2 12.5 M39.3 12.5 L39.3 17.6 L38.4 18.2 M37.6 14.8 L36.3 16.7 M40.9 14.8 L41.6 16.2 M44.5 5.9 C44.2 7.6 43.8 8.9 43.1 10 M44.4 8.2 L48.1 8.2 L47.3 10.7 M45.7 10.4 C45.2 13.6 44 15.8 42.4 17.6 M45.7 11.8 C46.4 14.2 47.4 16.2 48.6 17.6 M50.2 11.5 L62.7 11.5" fill="none" stroke="#3a3a3a" stroke-width="1.05"/></svg>
<div class="cell" style="left:98px;top:704.5px;width:184.5px">202401300924353421</div>
<div class="cell" style="left:282.5px;top:704.5px;width:171.5px">2024-01-30 09:27:16</div>
<div class="cell" style="left:728.5px;top:704.5px;width:119.0px">CNY/CNY</div>
<div class="cell" style="left:847.5px;top:704.5px;width:131.5px">1.00</div>
<div class="cell" style="left:979px;top:704.5px;width:46.5px">-</div>
<div class="cell" style="left:1025.5px;top:704.5px;width:53.0px">1</div>
<div class="cell" style="left:1078.5px;top:704.5px;width:128.0px">1.00</div>
<div class="cell" style="left:1206.5px;top:704.5px;width:124.0px">Classic Mode</div>
<div class="abs" style="left:463px;top:711.5px;width:6px;height:6px;border-radius:3px;background:#faad14"></div>
<div class="t" style="left:477.5px;top:704.5px">Awaiting Transfer</div>
<div class="t link" style="left:1365px;top:704.5px">Detail</div>
<div class="t link" style="left:1434px;top:704.5px">Transfers</div>
<div class="t link" style="left:1523.5px;top:704.5px">Cancel</div>
<div class="abs" style="left:1417.5px;top:707.5px;width:1px;height:14px;background:rgba(0,0,0,0.06)"></div>
<div class="abs" style="left:1507px;top:707.5px;width:1px;height:14px;background:rgba(0,0,0,0.06)"></div>
<div class="abs" style="left:66px;top:753.5px;width:16px;height:16px;border:1px solid #d9d9d9;border-radius:2px;background:#fff"></div>
<svg style="left:640px;top:750.0px" width="68" height="24"><path d="M10.3 5.6 L10.8 7.8 M5 8.4 L16.7 8.4 M7.4 8.4 C8.4 11.4 9.6 13.2 11.2 14.4 C12.8 15.8 14.6 16.9 16.7 17.6 M14.6 8.4 C13.6 11.4 12.6 13.2 11 14.4 C9.4 15.8 7.4 16.9 5 17.6 M23.3 7.1 L23.3 14.6 L26.5 14 M26.5 5.6 L26.5 17.8 L28.6 16.6 M29.6 5.9 C29.3 7.6 28.8 9 28.1 10.3 M30.2 7.8 L34.2 7.8 M33.3 7.8 C32.8 11.6 31.4 14.6 26.8 17.8 M28.6 10.6 C30 13.6 32 16 34.5 17.6 M36.3 7.3 L42.2 7.3 M39.3 5.3 L39.3 8.5 M36.6 10 L42 10 M36.3 12.5 L42.2 12.5 M39.3 12.5 L39.3 17.6 L38.4 18.2 M37.6 14.8 L36.3 16.7 M40.9 14.8 L41.6 16.2 M44.5 5.9 C44.2 7.6 43.8 8.9 43.1 10 M44.4 8.2 L48.1 8.2 L47.3 10.7 M45.7 10.4 C45.2 13.6 44 15.8 42.4 17.6 M45.7 11.8 C46.4 14.2 47.4 16.2 48.6 17.6 M50.2 11.5 L62.7 11.5" fill="none" stroke="#3a3a3a" stroke-width="1.05"/></svg>
<div class="cell" style="left:98px;top:751.5px;width:184.5px">202401300924352103</div>
<div class="cell" style="left:282.5px;top:751.5px;width:171.5px">2024-01-30 09:27:13</div>
<div class="cell" style="left:728.5px;top:751.5px;width:119.0px">CNY/CNY</div>
<div class="cell" style="left:847.5px;top:751.5px;width:131.5px">1.00</div>
<div class="cell" style="left:979px;top:751.5px;width:46.5px">-</div>
<div class="cell" style="left:1025.5px;top:751.5px;width:53.0px">1</div>
<div class="cell" style="left:1078.5px;top:751.5px;width:128.0px">1.00</div>
<div class="cell" style="left:1206.5px;top:751.5px;width:124.0px">Classic Mode</div>
<div class="abs" style="left:463px;top:758.5px;width:6px;height:6px;border-radius:3px;background:#faad14"></div>
<div class="t" style="left:477.5px;top:751.5px">Awaiting Transfer</div>
<div class="t link" style="left:1365px;top:751.5px">Detail</div>
<div class="t link" style="left:1434px;top:751.5px">Transfers</div>
<div class="t link" style="left:1523.5px;top:751.5px">Cancel</div>
<div class="abs" style="left:1417.5px;top:754.5px;width:1px;height:14px;background:rgba(0,0,0,0.06)"></div>
<div class="abs" style="left:1507px;top:754.5px;width:1px;height:14px;background:rgba(0,0,0,0.06)"></div>
<div class="abs" style="left:66px;top:800.5px;width:16px;height:16px;border:1px solid #d9d9d9;border-radius:2px;background:#fff"></div>
<svg style="left:640px;top:797.0px" width="68" height="24"><path d="M10.3 5.6 L10.8 7.8 M5 8.4 L16.7 8.4 M7.4 8.4 C8.4 11.4 9.6 13.2 11.2 14.4 C12.8 15.8 14.6 16.9 16.7 17.6 M14.6 8.4 C13.6 11.4 12.6 13.2 11 14.4 C9.4 15.8 7.4 16.9 5 17.6 M23.3 7.1 L23.3 14.6 L26.5 14 M26.5 5.6 L26.5 17.8 L28.6 16.6 M29.6 5.9 C29.3 7.6 28.8 9 28.1 10.3 M30.2 7.8 L34.2 7.8 M33.3 7.8 C32.8 11.6 31.4 14.6 26.8 17.8 M28.6 10.6 C30 13.6 32 16 34.5 17.6 M36.3 7.3 L42.2 7.3 M39.3 5.3 L39.3 8.5 M36.6 10 L42 10 M36.3 12.5 L42.2 12.5 M39.3 12.5 L39.3 17.6 L38.4 18.2 M37.6 14.8 L36.3 16.7 M40.9 14.8 L41.6 16.2 M44.5 5.9 C44.2 7.6 43.8 8.9 43.1 10 M44.4 8.2 L48.1 8.2 L47.3 10.7 M45.7 10.4 C45.2 13.6 44 15.8 42.4 17.6 M45.7 11.8 C46.4 14.2 47.4 16.2 48.6 17.6 M50.2 11.5 L62.7 11.5" fill="none" stroke="#3a3a3a" stroke-width="1.05"/></svg>
<div class="cell" style="left:98px;top:798.5px;width:184.5px">202401300924351236</div>
<div class="cell" style="left:282.5px;top:798.5px;width:171.5px">2024-01-30 09:27:10</div>
<div class="cell" style="left:728.5px;top:798.5px;width:119.0px">CNY/CNY</div>
<div class="cell" style="left:847.5px;top:798.5px;width:131.5px">1.00</div>
<div class="cell" style="left:979px;top:798.5px;width:46.5px">-</div>
<div class="cell" style="left:1025.5px;top:798.5px;width:53.0px">1</div>
<div class="cell" style="left:1078.5px;top:798.5px;width:128.0px">1.00</div>
<div class="cell" style="left:1206.5px;top:798.5px;width:124.0px">Classic Mode</div>
<div class="abs" style="left:463px;top:805.5px;width:6px;height:6px;border-radius:3px;background:#faad14"></div>
<div class="t" style="left:477.5px;top:798.5px">Awaiting Transfer</div>
<div class="t link" style="left:1365px;top:798.5px">Detail</div>
<div class="t link" style="left:1434px;top:798.5px">Transfers</div>
<div class="t link" style="left:1523.5px;top:798.5px">Cancel</div>
<div class="abs" style="left:1417.5px;top:801.5px;width:1px;height:14px;background:rgba(0,0,0,0.06)"></div>
<div class="abs" style="left:1507px;top:801.5px;width:1px;height:14px;background:rgba(0,0,0,0.06)"></div>
</div>
<svg style="left:0;top:0;z-index:8" width="1" height="1"><path d="M1692.4 187.5 L1693.4 187.9 L1671.7 252.7 L1667.9 251.3 Z" fill="#ed1c24"/><path d="M1666.1 260.9 L1664.8 249.3 L1668.5 251.4 L1671.3 252.5 L1674.3 253.2 Z" fill="#ed1c24"/><path d="M1768.1 350.7 L1769.1 350.1 L1791.1 396.4 L1787.3 398 Z" fill="#ed1c24"/><path d="M1792.6 406 L1784.2 398.4 L1787.6 397.9 L1790.9 396.5 L1793.6 394.3 Z" fill="#ed1c24"/></svg>
<div id="scroll"><div id="thumb"></div></div>
<div class="abs" style="left:0;top:838px;width:1895px;height:39px;background:linear-gradient(rgba(0,0,0,0),rgba(0,0,0,0.025) 40%,rgba(0,0,0,0.1));-webkit-mask-image:linear-gradient(90deg,rgba(0,0,0,0.1) 0,#000 110px,#000 1760px,rgba(0,0,0,0.1) 1870px);z-index:9"></div>
<div class="abs" style="left:0;top:877px;width:1910px;height:4px;background:linear-gradient(90deg,#8c8c8c 0,#8c8c8c 55px,#6a7b8c 60px,#66788a 900px,#5f7a82 1880px,#9a9a9a 1895px);z-index:10"></div>
<div class="abs" style="left:0;top:877px;width:1910px;height:1px;background:#555a60;z-index:11"></div>
<svg style="left:0;top:0;z-index:12" width="1" height="1"><path d="M1911 864 L1911 882 L1870 882 L1870 878 L1899 878 Q1910 878 1910 866 Z" fill="#a3a3a3"/><path d="M1870 877.5 L1899 877.5 Q1909.5 877.5 1909.5 866" fill="none" stroke="#5a5a5a" stroke-width="1"/></svg>
</body></html>
